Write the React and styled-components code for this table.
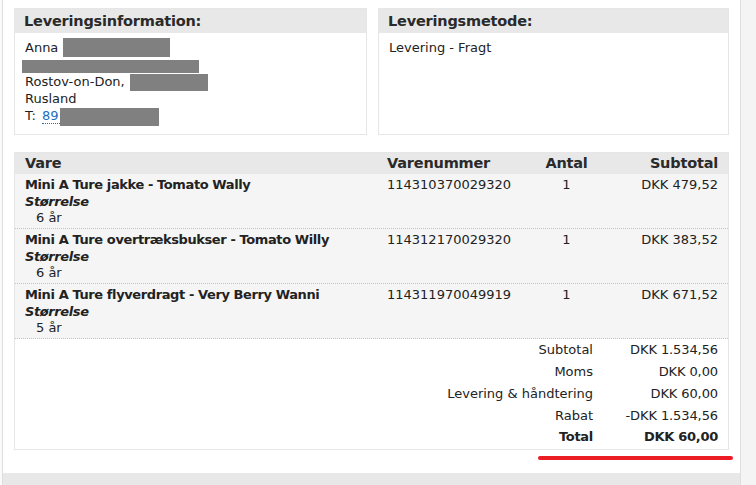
import React from "react";
import styled, { createGlobalStyle } from "styled-components";

const GlobalStyle = createGlobalStyle`
  html, body { margin: 0; padding: 0; background: #fafafa; }
  body {
    font-family: "DejaVu Sans", Verdana, sans-serif;
    font-size: 13px;
    color: #222;
  }
`;

const Page = styled.div`
  display: flex;
  height: 485px;
  overflow: hidden;
`;

const Gutter = styled.div`
  width: 2px;
  background: #fafafa;
`;

const Main = styled.div`
  flex: 1;
  display: flex;
  flex-direction: column;
  background: #fff;
  border-left: 1px solid #dedede;
  border-right: 1px solid #dedede;
`;

const Side = styled.div`
  width: 15px;
  background: #f4f4f4;
`;

const Content = styled.div`
  display: flex;
  flex-direction: column;
  padding: 8px 11px 13px;
`;

const Band = styled.div`
  height: 13px;
  background: #e8e8e8;
`;

const InfoGrid = styled.div`
  display: grid;
  grid-template-columns: 353px 1fr;
  gap: 11px;
  height: 127px;
`;

const Box = styled.section`
  display: flex;
  flex-direction: column;
  border: 1px solid #e6e6e6;
`;

const BoxHeader = styled.h2`
  margin: 0;
  height: 24px;
  line-height: 24px;
  padding-left: 9px;
  background: #e8e8e8;
  font-size: 14.5px;
  font-weight: bold;
  letter-spacing: -0.2px;
  color: #2a2a2a;
`;

const BoxBody = styled.div`
  padding: 6px 10px 0;
`;

const Line = styled.div`
  height: 17px;
  display: flex;
  align-items: center;
  white-space: pre;
`;

const Redacted = styled.span`
  display: inline-block;
  flex: none;
  background: #808080;
  width: ${(p) => p.$w}px;
  height: ${(p) => p.$h}px;
  margin-left: ${(p) => p.$ml || 0}px;
  margin-top: ${(p) => p.$mt || 0}px;
`;

const Phone = styled.a`
  color: #1a6fc2;
  text-decoration: none;
  border-bottom: 1px dotted #1a6fc2;
  line-height: 15px;
  margin-left: 2px;
  padding-right: 1px;
`;

const Table = styled.div`
  margin-top: 17px;
  border: 1px solid #e6e6e6;
  display: flex;
  flex-direction: column;
`;

const cols = "362px 153px 73px 1fr";

const HeadRow = styled.div`
  display: grid;
  grid-template-columns: ${cols};
  height: 21px;
  line-height: 21px;
  background: #e8e8e8;
  font-size: 14.5px;
  font-weight: bold;
  letter-spacing: -0.2px;
  color: #2a2a2a;
`;

const HeadCell = styled.div`
  padding: 0 10px;
  text-align: ${(p) => p.$align || "left"};
`;

const ItemRow = styled.div`
  display: grid;
  grid-template-columns: ${cols};
  height: 54px;
  box-sizing: content-box;
  background: #f5f5f5;
  border-bottom: 1px dotted #c4c4c4;
  line-height: 16.5px;
`;

const Cell = styled.div`
  padding: 3px 10px 0;
  text-align: ${(p) => p.$align || "left"};
`;

const ProductName = styled.div`
  font-weight: bold;
  letter-spacing: -0.4px;
`;

const OptionName = styled.div`
  font-weight: bold;
  font-style: italic;
  letter-spacing: -0.4px;
`;

const OptionValue = styled.div`
  padding-left: 11px;
`;

const Totals = styled.div`
  display: grid;
  grid-template-columns: 588px 1fr;
  grid-auto-rows: 21.75px;
  align-items: center;
  padding-bottom: 1px;
  background: #fff;
`;

const TotalLabel = styled.div`
  text-align: right;
  padding-right: 10px;
  font-weight: ${(p) => (p.$strong ? "bold" : "normal")};
  letter-spacing: ${(p) => (p.$strong ? "-0.3px" : "0")};
`;

const TotalValue = styled.div`
  text-align: right;
  padding-right: 10px;
  font-weight: ${(p) => (p.$strong ? "bold" : "normal")};
  letter-spacing: ${(p) => (p.$strong ? "-0.3px" : "-0.1px")};
`;

const Highlight = styled.div`
  align-self: flex-end;
  margin-top: 6px;
  margin-right: -4px;
  width: 195px;
  height: 4px;
  border-radius: 2px;
  background: #ec1c24;
`;

const items = [
  { name: "Mini A Ture jakke - Tomato Wally", sku: "114310370029320", qty: 1, size: "6 år", price: "DKK 479,52" },
  { name: "Mini A Ture overtræksbukser - Tomato Willy", sku: "114312170029320", qty: 1, size: "6 år", price: "DKK 383,52" },
  { name: "Mini A Ture flyverdragt - Very Berry Wanni", sku: "114311970049919", qty: 1, size: "5 år", price: "DKK 671,52" },
];

const totals = [
  { label: "Subtotal", value: "DKK 1.534,56" },
  { label: "Moms", value: "DKK 0,00" },
  { label: "Levering & håndtering", value: "DKK 60,00" },
  { label: "Rabat", value: "-DKK 1.534,56" },
  { label: "Total", value: "DKK 60,00", strong: true },
];

export default function App() {
  return (
    <>
      <GlobalStyle />
      <Page>
        <Gutter />
        <Main>
          <Content>
            <InfoGrid>
              <Box>
                <BoxHeader>Leveringsinformation:</BoxHeader>
                <BoxBody>
                  <Line>
                    {"Anna "}
                    <Redacted $w={107} $h={19} $ml={1} />
                  </Line>
                  <Line>
                    <Redacted $w={177} $h={13} $ml={-3} $mt={3} />
                  </Line>
                  <Line>
                    {"Rostov-on-Don, "}
                    <Redacted $w={78} $h={17} $ml={1} $mt={1} />
                  </Line>
                  <Line>Rusland</Line>
                  <Line>
                    {"T: "}
                    <Phone href="#">89</Phone>
                    <Redacted $w={99} $h={18} $mt={3} />
                  </Line>
                </BoxBody>
              </Box>
              <Box>
                <BoxHeader>Leveringsmetode:</BoxHeader>
                <BoxBody>
                  <Line>Levering - Fragt</Line>
                </BoxBody>
              </Box>
            </InfoGrid>

            <Table>
              <HeadRow>
                <HeadCell>Vare</HeadCell>
                <HeadCell>Varenummer</HeadCell>
                <HeadCell $align="center">Antal</HeadCell>
                <HeadCell $align="right">Subtotal</HeadCell>
              </HeadRow>
              {items.map((it) => (
                <ItemRow key={it.sku}>
                  <Cell>
                    <ProductName>{it.name}</ProductName>
                    <OptionName>Størrelse</OptionName>
                    <OptionValue>{it.size}</OptionValue>
                  </Cell>
                  <Cell>{it.sku}</Cell>
                  <Cell $align="center">{it.qty}</Cell>
                  <Cell $align="right">{it.price}</Cell>
                </ItemRow>
              ))}
              <Totals>
                {totals.map((t) => (
                  <React.Fragment key={t.label}>
                    <TotalLabel $strong={t.strong}>{t.label}</TotalLabel>
                    <TotalValue $strong={t.strong}>{t.value}</TotalValue>
                  </React.Fragment>
                ))}
              </Totals>
            </Table>
            <Highlight />
          </Content>
          <Band />
        </Main>
        <Side />
      </Page>
    </>
  );
}
